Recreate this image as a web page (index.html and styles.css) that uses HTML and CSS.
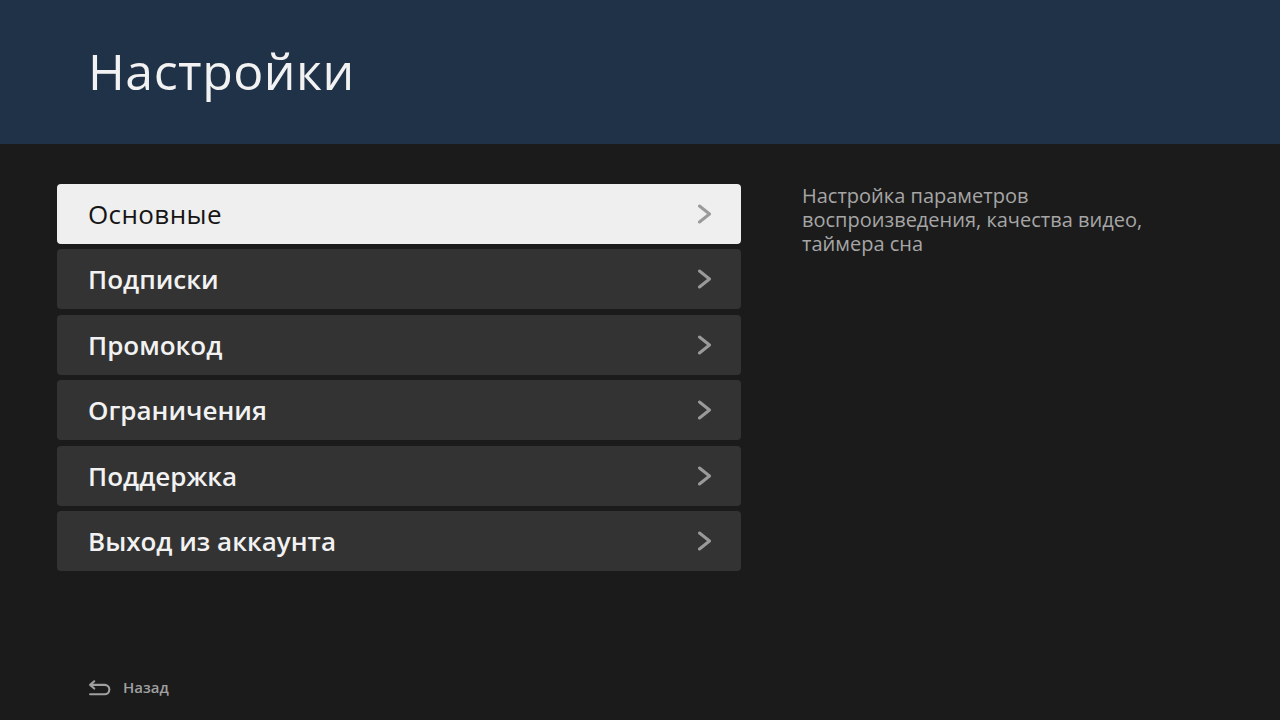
FILE: index.html
```html
<!DOCTYPE html>
<html lang="ru">
<head>
    <meta charset="UTF-8">
    <title>Настройки</title>
    <link rel="stylesheet" href="styles.css">
</head>
<body>

<header class="top-bar">
    <h1>Настройки</h1>
</header>

<main class="content">
    <ul class="menu">
        <li class="menu-item active"><span>Основные</span><svg class="chevron" viewBox="0 0 16 20"><path d="M2.5 2l10 8-10 8"/></svg></li>
        <li class="menu-item"><span>Подписки</span><svg class="chevron" viewBox="0 0 16 20"><path d="M2.5 2l10 8-10 8"/></svg></li>
        <li class="menu-item"><span>Промокод</span><svg class="chevron" viewBox="0 0 16 20"><path d="M2.5 2l10 8-10 8"/></svg></li>
        <li class="menu-item"><span>Ограничения</span><svg class="chevron" viewBox="0 0 16 20"><path d="M2.5 2l10 8-10 8"/></svg></li>
        <li class="menu-item"><span>Поддержка</span><svg class="chevron" viewBox="0 0 16 20"><path d="M2.5 2l10 8-10 8"/></svg></li>
        <li class="menu-item"><span>Выход из аккаунта</span><svg class="chevron" viewBox="0 0 16 20"><path d="M2.5 2l10 8-10 8"/></svg></li>
    </ul>

    <p class="description">Настройка параметров воспроизведения, качества видео, таймера сна</p>
</main>

<footer class="hint">
    <svg class="back-icon" viewBox="0 0 24 16"><path d="M6 2L2 5.5 6 9M2 5.5h14a4.5 4.5 0 0 1 0 9H2"/></svg>
    <span>Назад</span>
</footer>

</body>
</html>
```

FILE: styles.css
```css
body {
    margin: 0;
    width: 1280px;
    height: 720px;
    overflow: hidden;
    background-color: #1b1b1b;
    font-family: 'Open Sans', 'Noto Sans', sans-serif;
    color: #f0f0f0;
    position: relative;
}
.top-bar {
    height: 144px;
    background-color: #1f3248;
    box-sizing: border-box;
    padding: 37px 0 0 88px;
}
.top-bar h1 {
    margin: 0;
    font-size: 50px;
    font-weight: 400;
    line-height: 68px;
    color: #f2f2f2;
    letter-spacing: 0.5px;
}
.content {
    display: flex;
    padding: 40px 0 0 57px;
}
.menu {
    list-style: none;
    margin: 0;
    padding: 0;
    width: 684px;
    display: flex;
    flex-direction: column;
    gap: 5.4px;
}
.menu-item {
    height: 60px;
    display: flex;
    align-items: center;
    justify-content: space-between;
    padding: 0 28px 0 31px;
    background-color: #333333;
    border-radius: 4px;
    font-size: 26px;
    font-weight: 600;
    color: #f2f2f2;
}
.menu-item.active {
    background-color: #efefef;
    color: #151515;
    font-weight: 500;
    letter-spacing: 0.4px;
}
.chevron {
    width: 16px;
    height: 20px;
    fill: none;
    stroke: #9a9a9a;
    stroke-width: 3;
    stroke-linecap: round;
    stroke-linejoin: round;
}
.description {
    margin: 0 0 0 61px;
    width: 380px;
    font-size: 20px;
    line-height: 24px;
    color: #a6a6a6;
}
.hint {
    position: absolute;
    left: 88px;
    top: 677px;
    display: flex;
    align-items: center;
    gap: 10px;
    font-size: 15px;
    font-weight: 600;
    color: #a0a0a0;
}
.back-icon {
    width: 25px;
    height: 17px;
    fill: none;
    stroke: #a0a0a0;
    stroke-width: 2;
    stroke-linecap: round;
    stroke-linejoin: round;
}
```
